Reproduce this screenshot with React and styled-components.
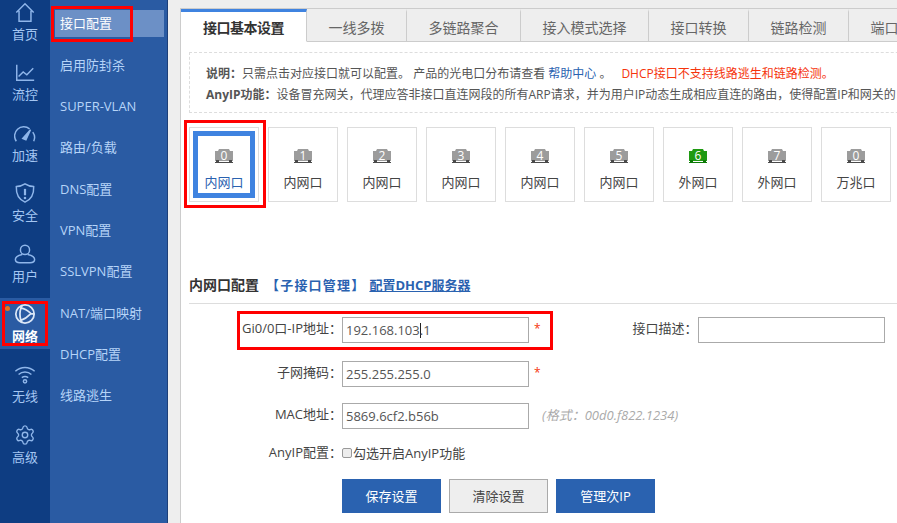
import React from 'react';
import styled, { createGlobalStyle } from 'styled-components';
import { Settings } from 'lucide-react';

const railItems = [
  { label: '首页', icon: 'home' },
  { label: '流控', icon: 'chart' },
  { label: '加速', icon: 'gauge' },
  { label: '安全', icon: 'shield' },
  { label: '用户', icon: 'user' },
  { label: '网络', icon: 'network', active: true },
  { label: '无线', icon: 'wifi' },
  { label: '高级', icon: 'gear' },
];

const subItems = ['接口配置', '启用防封杀', 'SUPER-VLAN', '路由/负载', 'DNS配置', 'VPN配置', 'SSLVPN配置', 'NAT/端口映射', 'DHCP配置', '线路逃生'];

const tabs = ['接口基本设置', '一线多拨', '多链路聚合', '接入模式选择', '接口转换', '链路检测', '端口镜像'];

const ports = [
  { no: '0', label: '内网口' },
  { no: '1', label: '内网口' },
  { no: '2', label: '内网口' },
  { no: '3', label: '内网口' },
  { no: '4', label: '内网口' },
  { no: '5', label: '内网口' },
  { no: '6', label: '外网口', up: true },
  { no: '7', label: '外网口' },
  { no: '0', label: '万兆口' },
];

const RailIcon = ({ name, active }) => {
  if (name === 'gear') {
    return <GearSvg strokeWidth={1.5} />;
  }
  const shapes = {
    home: <path d="M2.500 12.500 12 3l9.500 9.500M5.500 10.500V22h13V10.500" />,
    chart: <path d="M3 4v17h19M5 17l5-5 4 3 7-7" />,
    gauge: (
      <>
        <path d="M2.500 21a10 10 0 0 1 14.500-13.500M20.500 11a10 10 0 0 1 1 10" />
        <path d="m9.500 18 8.500-9.500-5 11z" fill="currentColor" />
      </>
    ),
    shield: (
      <>
        <path d="M12 2c3 2 6 2.800 9.500 3 .3 8-2 14-9.500 17C4.500 19 2.200 13 2.500 5 6 4.800 9 4 12 2z" />
        <path d="M12 7.500v7" strokeWidth="2.400" />
        <circle cx="12" cy="17.500" r="1.400" fill="currentColor" stroke="none" />
      </>
    ),
    user: (
      <>
        <circle cx="12" cy="7.500" r="5" />
        <path d="M9 12.500c-4 .8-7.500 2.500-7.500 5.500 0 2.500 2.500 3.500 5 3.500h11c2.500 0 5-1 5-3.500 0-3-3.500-4.700-7.500-5.500" />
      </>
    ),
    network: (
      <>
        <circle cx="12" cy="12" r="10" />
        <path d="M7.500 5.500Q13 6 18.500 11.500 13 17 7.500 19 5.500 12 7.500 5.500zM7.500 5.500 9 2.500M18.500 11.500 22 12M7.500 19 9 21.500" />
      </>
    ),
    wifi: (
      <>
        <path d="M1.500 9c6-5.500 15-5.500 21 0M5 12.500c4-3.500 10-3.500 14 0M8.500 16c2-1.500 5-1.500 7 0" />
        <circle cx="12" cy="20" r="1.800" />
      </>
    ),
  };
  return (
    <RailSvg viewBox="0 0 24 24" fill="none" stroke="currentColor" strokeWidth={active ? 1.9 : 1.6} $active={active}>
      {shapes[name]}
    </RailSvg>
  );
};

const PortGlyph = ({ no, up }) => (
  <PortIcon>
    <svg width="18" height="14" viewBox="0 0 18 14">
      <path d="M4 0h10l1 2h3v10H0V2h3z" fill={up ? '#1f9a12' : '#9c9c9c'} />
      <path d="M0 13h18v1H0zM1 11h3v2H1zM14 11h3v2h-3z" fill={up ? '#0c7a06' : '#4a4a4a'} />
    </svg>
    <PortNo>{no}</PortNo>
  </PortIcon>
);

const App = () => {
  return (
    <Page>
      <GlobalStyle />
      <Rail>
        {railItems.map((item) => (
          <RailItem key={item.label} $active={item.active}>
            {item.active && <RailDot />}
            {item.active && <RailFrame />}
            <RailIcon name={item.icon} active={item.active} />
            <span>{item.label}</span>
          </RailItem>
        ))}
      </Rail>
      <SubNav>
        {subItems.map((item, i) => (
          <SubRow key={item}>
            <SubItem $active={i === 0}>{item}</SubItem>
            {i === 0 && <SubFrame />}
          </SubRow>
        ))}
      </SubNav>
      <Main>
        <Panel>
          <TabBar>
            {tabs.map((tab, i) => (
              <Tab key={tab} $active={i === 0}>{tab}</Tab>
            ))}
            <TabRest />
          </TabBar>
          <Notice>
            <NoticeLine>
              <b>说明：</b>只需点击对应接口就可以配置。 产品的光电口分布请查看 <HelpLink>帮助中心</HelpLink> 。
              <Warn>DHCP接口不支持线路逃生和链路检测。</Warn>
            </NoticeLine>
            <NoticeLine>
              <b>AnyIP功能：</b>设备冒充网关，代理应答非接口直连网段的所有ARP请求，并为用户IP动态生成相应直连的路由，使得配置IP和网关的
            </NoticeLine>
          </Notice>
          <PortGrid>
            {ports.map((port, i) => (
              <PortCard key={i}>
                <PortInner $active={i === 0}>
                  <PortGlyph no={port.no} up={port.up} />
                  <PortLabel $active={i === 0}>{port.label}</PortLabel>
                </PortInner>
                {i === 0 && <CardFrame />}
              </PortCard>
            ))}
          </PortGrid>
          <SectionTitle>
            内网口配置<SubLink>【子接口管理】</SubLink><DhcpLink>配置DHCP服务器</DhcpLink>
          </SectionTitle>
          <Form>
            <FormRow $height={44}>
              <FieldLabel>Gi0/0口-IP地址：</FieldLabel>
              <Field>192.168.103<Caret />.1</Field>
              <Star>*</Star>
              <DescLabel>接口描述：</DescLabel>
              <DescField />
              <RowFrame />
            </FormRow>
            <FormRow $height={42}>
              <FieldLabel>子网掩码：</FieldLabel>
              <Field>255.255.255.0</Field>
              <Star>*</Star>
            </FormRow>
            <FormRow $height={38}>
              <FieldLabel>MAC地址：</FieldLabel>
              <Field>5869.6cf2.b56b</Field>
              <Hint>(格式：00d0.f822.1234)</Hint>
            </FormRow>
            <FormRow $height={38}>
              <FieldLabel>AnyIP配置：</FieldLabel>
              <CheckLabel>
                <CheckBox />勾选开启AnyIP功能
              </CheckLabel>
            </FormRow>
            <Actions>
              <PrimaryButton>保存设置</PrimaryButton>
              <PlainButton>清除设置</PlainButton>
              <PrimaryButton>管理次IP</PrimaryButton>
            </Actions>
          </Form>
        </Panel>
      </Main>
    </Page>
  );
};

export default App;

const GlobalStyle = createGlobalStyle`
  html, body {
    margin: 0;
    height: 100%;
    overflow: hidden;
  }
  body {
    font-family: "Open Sans", "Noto Sans CJK SC", sans-serif;
    font-size: 13px;
    color: #444;
  }
  * {
    box-sizing: border-box;
  }
`;

const Page = styled.div`
  display: flex;
  width: 897px;
  height: 523px;
  overflow: hidden;
`;

const Rail = styled.nav`
  flex: 0 0 50px;
  display: flex;
  flex-direction: column;
  gap: 9.4px;
  background: #0e3d82;
`;

const RailItem = styled.div`
  position: relative;
  flex: 0 0 51px;
  display: flex;
  flex-direction: column;
  align-items: center;
  padding-top: 5px;
  font-size: 13px;
  line-height: 18px;
  color: ${(p) => (p.$active ? '#fff' : '#a4c6f2')};
  font-weight: ${(p) => (p.$active ? 700 : 400)};
  background: ${(p) => (p.$active ? '#2a5ba3' : 'transparent')};
  &:first-child {
    margin-top: -4px;
  }
`;

const RailSvg = styled.svg`
  width: 22px;
  height: 22px;
  margin-bottom: 2px;
  color: ${(p) => (p.$active ? '#dbe7f7' : '#8fb6ea')};
`;

const GearSvg = styled(Settings)`
  width: 22px;
  height: 22px;
  margin-bottom: 2px;
  color: #8fb6ea;
`;

const RailDot = styled.i`
  position: absolute;
  left: 5px;
  top: 8px;
  width: 5px;
  height: 5px;
  border-radius: 50%;
  background: #e8701c;
`;

const RedFrame = styled.i`
  position: absolute;
  border: 3px solid #f00;
  pointer-events: none;
`;

const RailFrame = styled(RedFrame)`
  left: 2px;
  top: 3px;
  width: 46px;
  height: 45px;
`;

const SubNav = styled.nav`
  flex: 0 0 118px;
  display: grid;
  grid-auto-rows: 41.35px;
  align-content: start;
  padding-top: 3px;
  background: #2a5ba3;
  border-right: 1px solid #1d3f78;
`;

const SubRow = styled.div`
  position: relative;
  display: flex;
  align-items: center;
  padding: 0 3px 0 5px;
`;

const SubItem = styled.div`
  flex: 1;
  height: 27px;
  padding-left: 5px;
  font-size: 13px;
  line-height: 27px;
  white-space: nowrap;
  color: ${(p) => (p.$active ? '#fff' : '#b6d4f8')};
  background: ${(p) => (p.$active ? '#6c90c6' : 'transparent')};
`;

const SubFrame = styled(RedFrame)`
  left: 1px;
  top: 3px;
  width: 82px;
  height: 36px;
`;

const Main = styled.main`
  flex: 1;
  min-width: 0;
  padding: 8px 0 0 12px;
  background: #eeeeee;
`;

const Panel = styled.section`
  height: 100%;
  background: #fff;
  border-top: 1px solid #ccc;
  border-left: 1px solid #ccc;
  overflow: hidden;
`;

const TabBar = styled.div`
  display: flex;
  height: 33px;
  background: #eeeeee;
  white-space: nowrap;
`;

const Tab = styled.div`
  flex: none;
  padding: 0 ${(p) => (p.$active ? '22px' : '21.5px')};
  font-size: 14px;
  line-height: 32px;
  letter-spacing: ${(p) => (p.$active ? '-0.5px' : '0')};
  color: ${(p) => (p.$active ? '#333' : '#666')};
  font-weight: ${(p) => (p.$active ? 700 : 400)};
  background: ${(p) => (p.$active ? '#fff' : 'transparent')};
  border-top: 3px solid ${(p) => (p.$active ? '#3f83e0' : 'transparent')};
  border-right: 1px solid #ccc;
  border-bottom: 1px solid ${(p) => (p.$active ? '#fff' : '#ccc')};
`;

const TabRest = styled.div`
  flex: 1;
  border-bottom: 1px solid #ccc;
`;

const Notice = styled.div`
  height: 61px;
  margin: 10px 0 0 8px;
  padding: 10px 0 0 16px;
  width: 800px;
  font-size: 12px;
  line-height: 21px;
  color: #555;
  border: 1px dashed #ddd;
`;

const NoticeLine = styled.div`
  white-space: nowrap;
`;

const HelpLink = styled.span`
  color: #2a62b0;
`;

const Warn = styled.span`
  margin-left: 10px;
  color: #f5340c;
`;

const PortGrid = styled.div`
  display: flex;
  gap: 9px;
  margin: 14px 0 0 8px;
`;

const PortCard = styled.div`
  position: relative;
  flex: 0 0 70px;
  height: 75px;
  border: 1px solid #ddd;
`;

const PortInner = styled.div`
  display: flex;
  flex-direction: column;
  align-items: center;
  height: ${(p) => (p.$active ? '67px' : '100%')};
  margin: ${(p) => (p.$active ? '3px' : '0')};
  padding-top: ${(p) => (p.$active ? '13px' : '21px')};
  border: ${(p) => (p.$active ? '5px solid #3f83e0' : '0')};
`;

const PortIcon = styled.div`
  position: relative;
  width: 18px;
  height: 14px;
  svg {
    display: block;
  }
`;

const PortNo = styled.span`
  position: absolute;
  inset: 0;
  text-align: center;
  font-size: 12px;
  line-height: 13px;
  color: #fff;
`;

const PortLabel = styled.div`
  margin-top: 9px;
  font-size: 13px;
  line-height: 20px;
  color: ${(p) => (p.$active ? '#2a62b0' : '#444')};
`;

const CardFrame = styled(RedFrame)`
  left: -6px;
  top: -8px;
  width: 82px;
  height: 88px;
`;

const SectionTitle = styled.div`
  margin: 74px 0 0 8px;
  height: 28px;
  font-size: 14px;
  font-weight: 700;
  line-height: 18px;
  color: #333;
  border-bottom: 1px solid #ddd;
`;

const SubLink = styled.span`
  margin-left: 7px;
  font-size: 13px;
  letter-spacing: 1.2px;
  color: #2a62b0;
`;

const DhcpLink = styled.span`
  margin-left: 4px;
  font-size: 13px;
  color: #2a62b0;
  text-decoration: underline;
`;

const Form = styled.div`
  padding: 13px 0 0 8px;
`;

const FormRow = styled.div`
  position: relative;
  display: flex;
  align-items: flex-start;
  height: ${(p) => p.$height}px;
`;

const FieldLabel = styled.div`
  flex: 0 0 153px;
  text-align: right;
  font-size: 13px;
  line-height: 23px;
  white-space: nowrap;
  color: #444;
`;

const Field = styled.div`
  flex: 0 0 187px;
  height: 26px;
  padding-left: 3px;
  font-size: 13px;
  line-height: 24px;
  color: #555;
  border: 1px solid #aaa;
`;

const Caret = styled.span`
  display: inline-block;
  width: 1px;
  height: 15px;
  margin-right: -1px;
  vertical-align: -3px;
  background: #222;
`;

const Star = styled.span`
  margin-left: 5px;
  font-size: 12px;
  line-height: 23px;
  color: #f5340c;
`;

const DescLabel = styled.div`
  margin-left: 92px;
  font-size: 13px;
  line-height: 23px;
  white-space: nowrap;
`;

const DescField = styled.div`
  flex: 0 0 187px;
  height: 26px;
  border: 1px solid #aaa;
`;

const RowFrame = styled(RedFrame)`
  left: 48px;
  top: -6px;
  width: 316px;
  height: 39px;
`;

const Hint = styled.span`
  margin-left: 13px;
  font-size: 13px;
  font-style: italic;
  line-height: 24px;
  color: #aaa;
`;

const CheckLabel = styled.label`
  display: flex;
  align-items: center;
  height: 23px;
  font-size: 13px;
  color: #444;
`;

const CheckBox = styled.i`
  width: 10px;
  height: 10px;
  margin-right: 1px;
  background: #ededed;
  border: 1px solid #999;
  border-radius: 2px;
`;

const Actions = styled.div`
  display: flex;
  gap: 8px;
  padding-left: 153px;
`;

const PrimaryButton = styled.div`
  width: 99px;
  height: 34px;
  font-size: 13px;
  line-height: 34px;
  text-align: center;
  color: #fff;
  background: #2a62b0;
`;

const PlainButton = styled(PrimaryButton)`
  line-height: 32px;
  color: #444;
  background: #eeeeee;
  border: 1px solid #aaa;
`;
